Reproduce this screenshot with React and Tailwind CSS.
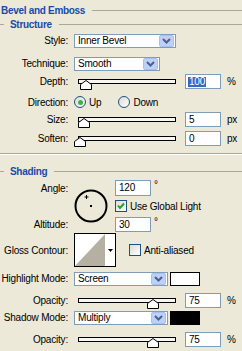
import React from "react";

const LABEL = "w-[68px] shrink-0 text-right";

function Chevron() {
  return (
    <svg width="9" height="6" viewBox="0 0 9 6">
      <path d="M1 1 L4.5 4.5 L8 1" fill="none" stroke="#4d6185" strokeWidth="2" />
    </svg>
  );
}

function Select({ value, w }) {
  return (
    <div className={`${w} h-[14px] border border-[#7f9db9] bg-white flex items-center`}>
      <span className="flex-1 pl-[3px] leading-none">{value}</span>
      <div className="w-[15px] h-[12px] mr-[1px] rounded-[2px] bg-[#bcd0fa] border border-[#a9c0f3] flex items-center justify-center">
        <Chevron />
      </div>
    </div>
  );
}

function Input({ value, selected, h = "h-[15px]" }) {
  return (
    <div className={`w-[36px] ${h} border border-[#7f9db9] bg-white flex items-center pl-[2px] leading-none`}>
      {selected ? <span className="bg-[#316ac5] text-white px-[1px]">{value}</span> : <span className="pl-[1px]">{value}</span>}
    </div>
  );
}

function Thumb() {
  return (
    <svg width="12" height="10" viewBox="0 0 12 10">
      <path d="M0.5 9.5 L0.5 4.5 L6 0.5 L11.5 4.5 L11.5 9.5 Z" fill="#fff" stroke="#000" strokeWidth="1" />
    </svg>
  );
}

function Slider({ pos }) {
  return (
    <div className="relative w-[98px] h-[15px] ml-[10px] flex items-center">
      <div className="w-full h-[5px] border border-black bg-[#f7f6f1]" />
      <div className="absolute top-[6px]" style={{ left: pos }}>
        <Thumb />
      </div>
    </div>
  );
}

function SliderRow({ label, value, unit, pos, selected, mt }) {
  return (
    <div className={`flex items-center ${mt}`}>
      <div className={LABEL}>{label}</div>
      <Slider pos={pos} />
      <div className="ml-[9px]">
        <Input value={value} selected={selected} />
      </div>
      <span className="ml-[6px]">{unit}</span>
    </div>
  );
}

function Radio({ checked }) {
  return (
    <div className="w-[12px] h-[12px] rounded-full border border-[#1c5180] bg-gradient-to-br from-[#dcdbd3] to-white flex items-center justify-center">
      {checked && <div className="w-[5px] h-[5px] rounded-full bg-[#3cb43c]" />}
    </div>
  );
}

function Checkbox({ checked }) {
  return (
    <div className="w-[12px] h-[12px] border border-[#1c5180] bg-gradient-to-br from-[#dcdbd3] to-white flex items-center justify-center">
      {checked && (
        <svg width="8" height="8" viewBox="0 0 8 8">
          <path d="M1 3.5 L3 6 L7 1.5" fill="none" stroke="#21a121" strokeWidth="2" />
        </svg>
      )}
    </div>
  );
}

function Header({ children, indent }) {
  return (
    <div className="flex items-center h-[12px]">
      {indent && <div className="w-[4px] h-px bg-[#aca899] mr-[6px]" />}
      <span className="font-bold text-[#1a4aab] tracking-[-0.3px]">{children}</span>
      <div className="flex-1 ml-[7px] h-px bg-[#aca899]" />
    </div>
  );
}

export default function App() {
  return (
    <div
      className="w-[242px] h-[351px] bg-[#ece9d8] text-black text-[10px] tracking-[-0.2px] overflow-hidden"
      style={{ fontFamily: '"Liberation Sans", Arial, sans-serif' }}
    >
      <div className="pt-[4px] pl-[1px]">
        <Header>Bevel and Emboss</Header>
      </div>
      <div className="mt-[2px]">
        <Header indent>Structure</Header>
      </div>

      <div className="flex items-center mt-[3px]">
        <div className={LABEL}>Style:</div>
        <div className="ml-[6px]">
          <Select value="Inner Bevel" w="w-[102px]" />
        </div>
      </div>

      <div className="flex items-center mt-[8px]">
        <div className={LABEL}>Technique:</div>
        <div className="ml-[6px]">
          <Select value="Smooth" w="w-[86px]" />
        </div>
      </div>

      <SliderRow label="Depth:" value="100" unit="%" pos={2} selected mt="mt-[3px]" />

      <div className="flex items-center mt-[6px] h-[14px]">
        <div className={LABEL}>Direction:</div>
        <div className="ml-[6px] flex items-center">
          <Radio checked />
          <span className="ml-[3px]">Up</span>
          <div className="ml-[17px]">
            <Radio />
          </div>
          <span className="ml-[3px]">Down</span>
        </div>
      </div>

      <SliderRow label="Size:" value="5" unit="px" pos={0} mt="mt-[3px]" />
      <SliderRow label="Soften:" value="0" unit="px" pos={-4} mt="mt-[4px]" />

      <div className="mt-[7px] h-px bg-[#aca899]" />
      <div className="h-px bg-white" />

      <div className="mt-[10px]">
        <Header indent>Shading</Header>
      </div>

      <div className="flex mt-[3px]">
        <div className={`${LABEL} flex flex-col`}>
          <div className="h-[16px] flex items-center justify-end">Angle:</div>
          <div className="h-[21px]" />
          <div className="h-[15px] flex items-center justify-end">Altitude:</div>
        </div>
        <div className="ml-[6px] mt-[9px]">
          <svg width="34" height="34" viewBox="0 0 34 34">
            <circle cx="17" cy="17" r="15.5" fill="none" stroke="#000" strokeWidth="2" />
            <rect x="16" y="16" width="2" height="2" fill="#000" />
            <path d="M12.5 6 V10 M10.5 8 H14.5" stroke="#000" strokeWidth="1" />
          </svg>
        </div>
        <div className="ml-[7px] flex flex-col">
          <div className="flex items-start">
            <Input value="120" h="h-[16px]" />
            <span className="ml-[3px] leading-none">°</span>
          </div>
          <div className="flex items-center mt-[4px] h-[12px]">
            <Checkbox checked />
            <span className="ml-[3px]">Use Global Light</span>
          </div>
          <div className="flex items-start mt-[5px]">
            <Input value="30" />
            <span className="ml-[3px] leading-none">°</span>
          </div>
        </div>
      </div>

      <div className="flex items-center mt-[1px]">
        <div className={LABEL}>Gloss Contour:</div>
        <div className="ml-[6px] w-[42px] h-[34px] border border-black bg-white flex">
          <svg width="30" height="32" viewBox="0 0 30 32">
            <path d="M0 32 L30 0 L30 32 Z" fill="#b4b0a2" />
          </svg>
          <div className="flex-1 flex items-center justify-center">
            <svg width="5" height="3" viewBox="0 0 5 3">
              <path d="M0 0 H5 L2.5 3 Z" fill="#000" />
            </svg>
          </div>
        </div>
        <div className="ml-[13px] flex items-center">
          <Checkbox />
          <span className="ml-[3px]">Anti-aliased</span>
        </div>
      </div>

      <div className="flex items-center mt-[4px]">
        <div className={LABEL}>Highlight Mode:</div>
        <div className="ml-[6px]">
          <Select value="Screen" w="w-[94px]" />
        </div>
        <div className="ml-[2px] w-[30px] h-[14px] border border-black bg-white" />
      </div>

      <SliderRow label="Opacity:" value="75" unit="%" pos={69} mt="mt-[7px]" />

      <div className="flex items-center mt-[2px]">
        <div className={LABEL}>Shadow Mode:</div>
        <div className="ml-[6px]">
          <Select value="Multiply" w="w-[94px]" />
        </div>
        <div className="ml-[2px] w-[30px] h-[14px] border border-black bg-black" />
      </div>

      <SliderRow label="Opacity:" value="75" unit="%" pos={69} mt="mt-[7px]" />
    </div>
  );
}
